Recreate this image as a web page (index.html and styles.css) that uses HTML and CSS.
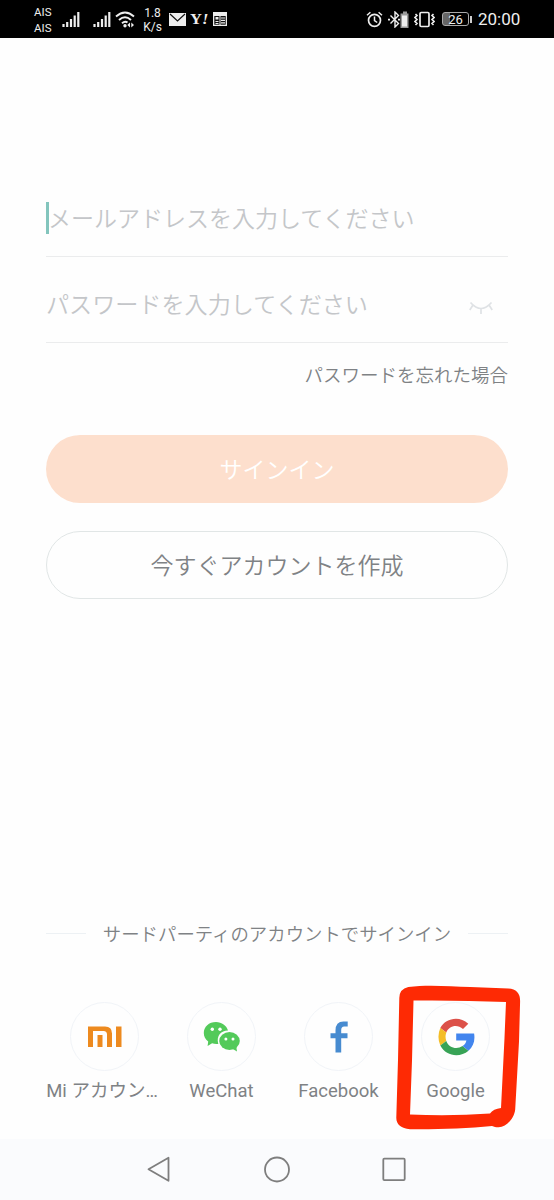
FILE: index.html
```
<!DOCTYPE html>
<html lang="ja">
<head>
  <meta charset="utf-8">
  <title>サインイン</title>
  <link rel="stylesheet" href="styles.css">
</head>
<body>
  <div class="status-bar">
    <div class="carrier"><span>AIS</span><span>AIS</span></div>
    <svg class="signal" width="18" height="17" viewBox="0 0 18 17"><path d="M1.5 16v-3M5.2 16v-5M9 16V8M12.700 16V4.500M16.300 16V1" stroke="#eee" stroke-width="2.200" fill="none"/></svg>
    <svg class="signal signal-2" width="18" height="17" viewBox="0 0 18 17"><path d="M1.5 16v-3M5.2 16v-5M9 16V8M12.700 16V4.500M16.300 16V1" stroke="#eee" stroke-width="2.200" fill="none"/></svg>
    <svg class="wifi" width="20" height="17" viewBox="0 0 20 17">
      <path d="M1 5.500Q10-2.500 19 5.500M4 9Q10 3.500 16 9M7 12.300Q10 9.500 12.500 11.500" stroke="#eee" stroke-width="1.900" fill="none"/>
      <circle cx="10" cy="14.800" r="1.700" fill="#eee"/>
      <path d="M15 11.500v5l-2.700-2.500zM16.300 11.500v5l2.700-2.500z" fill="#eee"/>
    </svg>
    <div class="speed"><span>1.8</span><span>K/s</span></div>
    <svg class="mail" width="17" height="13" viewBox="0 0 17 13"><path d="M0 0h17v13H0z" fill="#eee"/><path d="M1 1l7.500 7L16 1" stroke="#111" stroke-width="1.200" fill="none"/></svg>
    <span class="yahoo">Y<i>!</i></span>
    <svg class="news" width="14" height="14" viewBox="0 0 14 14"><path d="M0 0h14v14H0z" fill="#eee"/><path d="M1.300 4h11.400v8.700H1.300z" fill="#111"/><path d="M2.500 5h3v2.500h-3zM2.500 9h3v1h-3zM2.500 11h3v1h-3zM6.500 4h1v9h-1zM8 5.400h4v1.200H8zM8 7.800h4V9H8zM8 10.300h4v1.200H8z" fill="#eee"/></svg>

    <svg class="alarm" width="17" height="17" viewBox="0 0 17 17"><circle cx="8.500" cy="9.300" r="6" stroke="#eee" stroke-width="1.700" fill="none"/><path d="M8.500 5.500v4l2.700 2M1 4.200l3.400-2.900M16 4.200l-3.400-2.900" stroke="#eee" stroke-width="1.500" fill="none"/></svg>
    <svg class="bluetooth" width="21" height="17" viewBox="0 0 21 17">
      <path d="M2.500 4.500l8 8L7 16V1l3.500 3.500-8 8" stroke="#eee" stroke-width="1.400" fill="none"/>
      <path d="M0 7.800h2v1.600H0zM10 7.800h2v1.600h-2z" fill="#eee"/>
      <path d="M15 .5h4v2h1.500V17h-8V2.500H15z" fill="#999"/>
      <path d="M14 4.500h5v11h-5z" fill="#eee"/>
    </svg>
    <svg class="vibrate" width="21" height="17" viewBox="0 0 21 17"><rect x="6" y="1.500" width="9" height="14" rx="1.200" stroke="#eee" stroke-width="1.700" fill="none"/><path d="M1.500 3l1.500 1.500-2 2 2 2-2 2 2 2-1.500 1.500M19.500 3l-1.500 1.500 2 2-2 2 2 2-2 2 1.500 1.500" stroke="#eee" stroke-width="1.600" fill="none"/></svg>
    <div class="battery">26</div>
    <span class="clock">20:00</span>
  </div>

  <div class="login">
    <div class="field field-active"><span class="caret"></span><span class="hint">メールアドレスを入力してください</span></div>
    <div class="field">パスワードを入力してください
      <svg class="eye" width="24" height="15" viewBox="0 0 24 15"><path d="M1.500 2.500Q12 14.500 22.500 2.500M3.800 5.200L.8 10M20.200 5.200l3 4.800M12 8.800V14" stroke="#dfe2e5" stroke-width="1.700" fill="none"/></svg>
    </div>
    <a class="forgot">パスワードを忘れた場合</a>
    <button class="btn btn-primary">サインイン</button>
    <button class="btn btn-outline">今すぐアカウントを作成</button>
  </div>

  <div class="third-party">
    <div class="divider"><span>サードパーティのアカウントでサインイン</span></div>
    <div class="accounts">
      <div class="account">
        <div class="circle">
          <svg width="34" height="22" viewBox="0 0 34 22" fill="#ed8a1f"><path d="M0 .5h17q7 0 7 7V21h-5V8.500q0-3.500-3.500-3.500H5v16H0zM9.500 9h5v12h-5zM28 .5h5.500V21H28z"/></svg>
        </div>
        <span class="label-mi">Mi アカウン…</span>
      </div>
      <div class="account">
        <div class="circle">
          <svg width="38" height="32" viewBox="0 0 38 32">
            <path d="M13 1C5.900 1 .8 5.900.8 12c0 3.500 1.600 6.300 4.400 8.500L4.600 25l4.500-2.700c2 .7 3.900.8 6.200.6C13 14.500 18.500 9.500 25 9.600 23.600 4.500 18.800 1 13 1z" fill="#53ca5a"/>
            <ellipse cx="26.500" cy="20" rx="10.300" ry="9" fill="#53ca5a"/>
            <path d="M29 27.500l5 3-.8-5.500z" fill="#53ca5a"/>
            <circle cx="9.300" cy="8.200" r="1.700" fill="#fff"/><circle cx="17" cy="8.200" r="1.700" fill="#fff"/>
            <circle cx="22.900" cy="18" r="1.500" fill="#fff"/><circle cx="30" cy="18" r="1.500" fill="#fff"/>
          </svg>
        </div>
        <span>WeChat</span>
      </div>
      <div class="account">
        <div class="circle">
          <svg width="18" height="32" viewBox="0 0 18 32"><path d="M5.500 31.500V17.200H.5v-5h5V9.500Q5.500.5 13.500.5h4.200v5h-3.500q-3 0-3 3.500v3.200h6.300v5h-6.300v14.300z" fill="#478bd0"/></svg>
        </div>
        <span>Facebook</span>
      </div>
      <div class="account">
        <div class="circle">
          <svg width="38" height="38" viewBox="0 0 38 38">
            <path d="M3.300 10C8 .5 22-3 31.300 5.700L26 11C20 5.500 11.800 8 9.300 14.500z" fill="#dc5149"/>
            <path d="M3.300 10q-3.700 8.500 0 17.500l6-4.600q-1.500-4 0-8.400z" fill="#f4bd27"/>
            <path d="M3.300 27.500C9 38.500 23 40 31.500 32.700l-6-4.600C19.500 32 11.500 29.500 9.300 22.900z" fill="#38a356"/>
            <path d="M19.200 15.600h17.900c1.200 7.400-.8 13-5.600 17.100l-6-4.600c2.200-1.500 3.400-3.200 3.900-5.600H19.200z" fill="#4285ee"/>
          </svg>
        </div>
        <span>Google</span>
      </div>
    </div>
  </div>

  <div class="nav-bar">
    <svg width="24" height="28" viewBox="0 0 24 28"><path d="M21.500 2.800v23L1.500 14.300z"/></svg>
    <svg width="28" height="28" viewBox="0 0 28 28"><circle cx="14" cy="14.500" r="12"/></svg>
    <svg width="24" height="28" viewBox="0 0 24 28"><rect x="1.300" y="3.700" width="21.400" height="21.400" rx="1"/></svg>
  </div>

  <!-- hand drawn marker around Google -->
  <svg class="marker" width="128" height="148" viewBox="394 984 128 148">
    <path fill="#fe2a04" fill-rule="evenodd" d="M399.300 998q0-9 9-11c20-2.500 42-.5 62 0l38 1.500q12 .5 11.800 13l-1.100 40-3.800 68c-1 9-9 18-17 17.700-2.500 0-4-.2-6.200-1.200-25 2.500-55 3.500-82 3.200-9-.5-14-5-13.700-12L398 1060zM413.500 1000.500l-1.500 60-2 54q40 2 80-1c2-3 6-5 11-5.500l3.500-70 1.500-36q-46-2-92.500-1.500z"/>
  </svg>
</body>
</html>
```
FILE: styles.css
```
* {
  box-sizing: border-box;
}

body {
  position: relative;
  display: flex;
  flex-direction: column;
  width: 554px;
  height: 1200px;
  margin: 0;
  background-color: #fefefe;
  color: #7f8285;
  font-family: Roboto, "Noto Sans CJK JP", sans-serif;
  overflow: hidden;
}

svg {
  display: block;
  flex-shrink: 0;
}

.status-bar {
  display: flex;
  align-items: center;
  height: 38px;
  padding-left: 34px;
  background-color: #000;
  color: #eee;
}

.carrier,
.speed {
  display: flex;
  flex-direction: column;
  font-size: 12px;
  line-height: 16px;
}

.carrier {
  width: 28px;
  font-size: 11.500px;
  padding-top: 1px;
}

.speed {
  width: 19px;
  margin: 2px 7px 0 8px;
  line-height: 14px;
  text-align: center;
}

.signal-2 {
  margin-left: 13px;
}

.wifi {
  margin-left: 4px;
}

.yahoo {
  width: 18px;
  margin: 1px 4px 0 5px;
  font-family: "Liberation Serif", serif;
  font-size: 15px;
  font-weight: bold;
  transform: scaleX(1.1);
}

.alarm {
  margin-left: 139px;
}

.bluetooth {
  margin-left: 5px;
}

.vibrate {
  margin-left: 5px;
}

.battery {
  position: relative;
  width: 27px;
  height: 14px;
  margin: 0 9px 0 7px;
  border: 1px solid #aaa;
  border-radius: 3px;
  background: linear-gradient(90deg, #666 26%, #000 26%);
  font-size: 13px;
  line-height: 13px;
  text-align: center;
}

.battery::after {
  content: "";
  position: absolute;
  top: 3px;
  right: -4px;
  width: 2px;
  height: 7px;
  background-color: #ccc;
}

.clock {
  font-size: 17px;
}

.login {
  display: flex;
  flex-direction: column;
  padding: 142px 46px 0;
}

.field {
  display: flex;
  align-items: center;
  justify-content: space-between;
  height: 86px;
  padding: 7px 15px 0 0;
  border-bottom: 1px solid #ebeced;
  color: #c4c6c9;
  font-size: 23.100px;
  font-weight: 350;
}

.field-active {
  height: 77px;
  padding-top: 0;
  font-size: 23px;
  justify-content: flex-start;
}

.caret {
  width: 3px;
  height: 32px;
  margin-right: -1px;
  background-color: #83c5bd;
}

.hint {
  padding-bottom: 2px;
}

.eye {
  margin-top: 8px;
}

.forgot {
  align-self: flex-end;
  margin: 18px 0 44px;
  font-size: 18.500px;
  font-weight: 350;
  line-height: 30px;
}

.btn {
  height: 68px;
  padding: 0 0 2px;
  border: none;
  border-radius: 34px;
  font-family: inherit;
  font-size: 23px;
  font-weight: 350;
}

.btn-primary {
  background-color: #fddfcd;
  color: #fff;
}

.btn-outline {
  margin-top: 28px;
  border: 1px solid #e1e6e6;
  background-color: #fefefe;
  color: #7f8285;
}

.third-party {
  margin-top: auto;
  padding: 0 46px;
}

.divider {
  display: flex;
  align-items: center;
  justify-content: space-between;
  height: 30px;
  font-size: 18.400px;
  font-weight: 350;
}

.divider::before,
.divider::after {
  content: "";
  width: 40px;
  height: 1px;
  background-color: #edf1f4;
}

.accounts {
  display: grid;
  grid-template-columns: repeat(4, 117px);
  margin-top: 54px;
}

.account {
  display: flex;
  flex-direction: column;
  align-items: center;
  height: 137px;
  font-size: 18.500px;
  line-height: 28px;
  white-space: nowrap;
}

.label-mi {
  margin-right: 5px;
}

.circle {
  display: flex;
  align-items: center;
  justify-content: center;
  width: 69px;
  height: 69px;
  margin-bottom: 6px;
  border: 1px solid #f1f4f8;
  border-radius: 50%;
}

.nav-bar {
  display: flex;
  justify-content: space-between;
  height: 61px;
  padding: 16px 148px 0 147px;
  background-color: #fafbfd;
}

.nav-bar svg {
  fill: none;
  stroke: #7e7e7e;
  stroke-width: 1.800;
  stroke-linejoin: round;
}

.marker {
  position: absolute;
  left: 394px;
  top: 984px;
}
```
